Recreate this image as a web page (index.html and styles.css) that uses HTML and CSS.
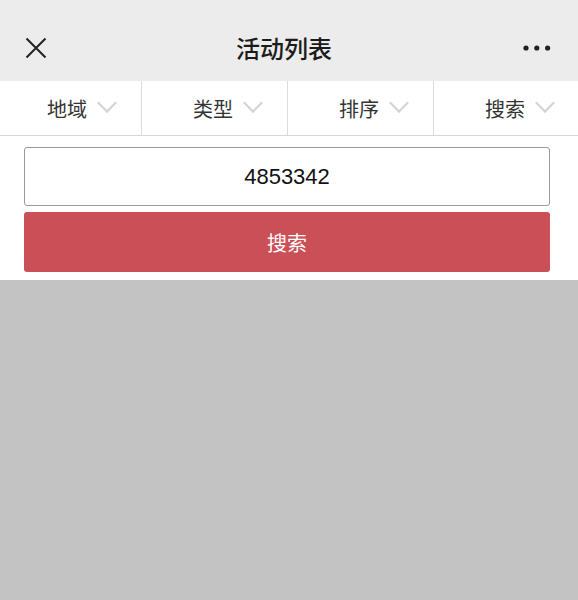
FILE: index.html
```html
<!DOCTYPE html>
<html lang="zh-CN">
<head>
  <meta charset="UTF-8" />
  <meta name="viewport" content="width=device-width, initial-scale=1.0" />
  <title>活动列表</title>
  <link rel="stylesheet" href="styles.css">
</head>
<body>
  <header class="topbar">
    <button class="icon-btn close" aria-label="关闭">
      <svg width="22" height="22" viewBox="0 0 22 22">
        <path d="M1.5 1.5 L20.5 20.5 M20.5 1.5 L1.5 20.5" stroke="#222" stroke-width="2" fill="none" />
      </svg>
    </button>
    <h1 class="title">活动列表</h1>
    <button class="icon-btn more" aria-label="更多">
      <svg width="28" height="6" viewBox="0 0 28 6">
        <circle cx="3" cy="3" r="2.6" fill="#222" />
        <circle cx="13.8" cy="3" r="2.6" fill="#222" />
        <circle cx="24.6" cy="3" r="2.6" fill="#222" />
      </svg>
    </button>
  </header>

  <nav class="filters">
    <div class="filter">地域<span class="chev"></span></div>
    <div class="filter">类型<span class="chev"></span></div>
    <div class="filter">排序<span class="chev"></span></div>
    <div class="filter">搜索<span class="chev"></span></div>
  </nav>

  <section class="search-box">
    <input type="text" class="search-input" value="4853342">
    <button class="search-btn">搜索</button>
  </section>

  <main class="empty"></main>
</body>
</html>
```

FILE: styles.css
```css
html, body {
  height: 100%;
}
body {
  margin: 0;
  display: flex;
  flex-direction: column;
  background: #c3c3c3;
  font-family: "Noto Sans CJK SC", "Liberation Sans", sans-serif;
  color: #333;
}
.topbar {
  height: 66px;
  padding-top: 15px;
  display: flex;
  align-items: center;
  justify-content: space-between;
  background: #ececec;
  padding-left: 25px;
  padding-right: 27px;
}
.icon-btn {
  border: none;
  background: none;
  padding: 0;
  display: flex;
  align-items: center;
  width: 30px;
}
.more {
  justify-content: flex-end;
}
.title {
  margin: 0;
  margin-top: -2px;
  margin-left: -8px;
  font-size: 24px;
  font-weight: 500;
  color: #1b1b1b;
}
.filters {
  display: grid;
  grid-template-columns: 142px 146px 146px 1fr;
  height: 54px;
  background: #fff;
  border-bottom: 1px solid #d6d6d6;
}
.filter {
  display: flex;
  align-items: center;
  justify-content: flex-end;
  padding-right: 27px;
  font-size: 20px;
  color: #333;
  border-right: 1px solid #dcdcdc;
}
.filter:last-child {
  border-right: none;
  padding-right: 26px;
}
.chev {
  width: 12px;
  height: 12px;
  margin-left: 13px;
  margin-top: -10px;
  border-right: 2px solid #d2d2d2;
  border-bottom: 2px solid #d2d2d2;
  transform: rotate(45deg);
}
.search-box {
  background: #fff;
  padding: 11px 28px 8px 24px;
  display: flex;
  flex-direction: column;
  gap: 6px;
}
.search-input {
  box-sizing: border-box;
  height: 59px;
  width: 100%;
  border: 1px solid #9a9a9a;
  border-radius: 3px;
  text-align: center;
  font-family: "Liberation Sans", sans-serif;
  font-size: 22px;
  color: #111;
  outline: none;
}
.search-btn {
  height: 60px;
  width: 100%;
  border: none;
  border-radius: 3px;
  background: #cb4f57;
  color: #fff;
  font-family: "Noto Sans CJK SC", sans-serif;
  font-size: 20px;
}
.empty {
  flex: 1;
}
```
